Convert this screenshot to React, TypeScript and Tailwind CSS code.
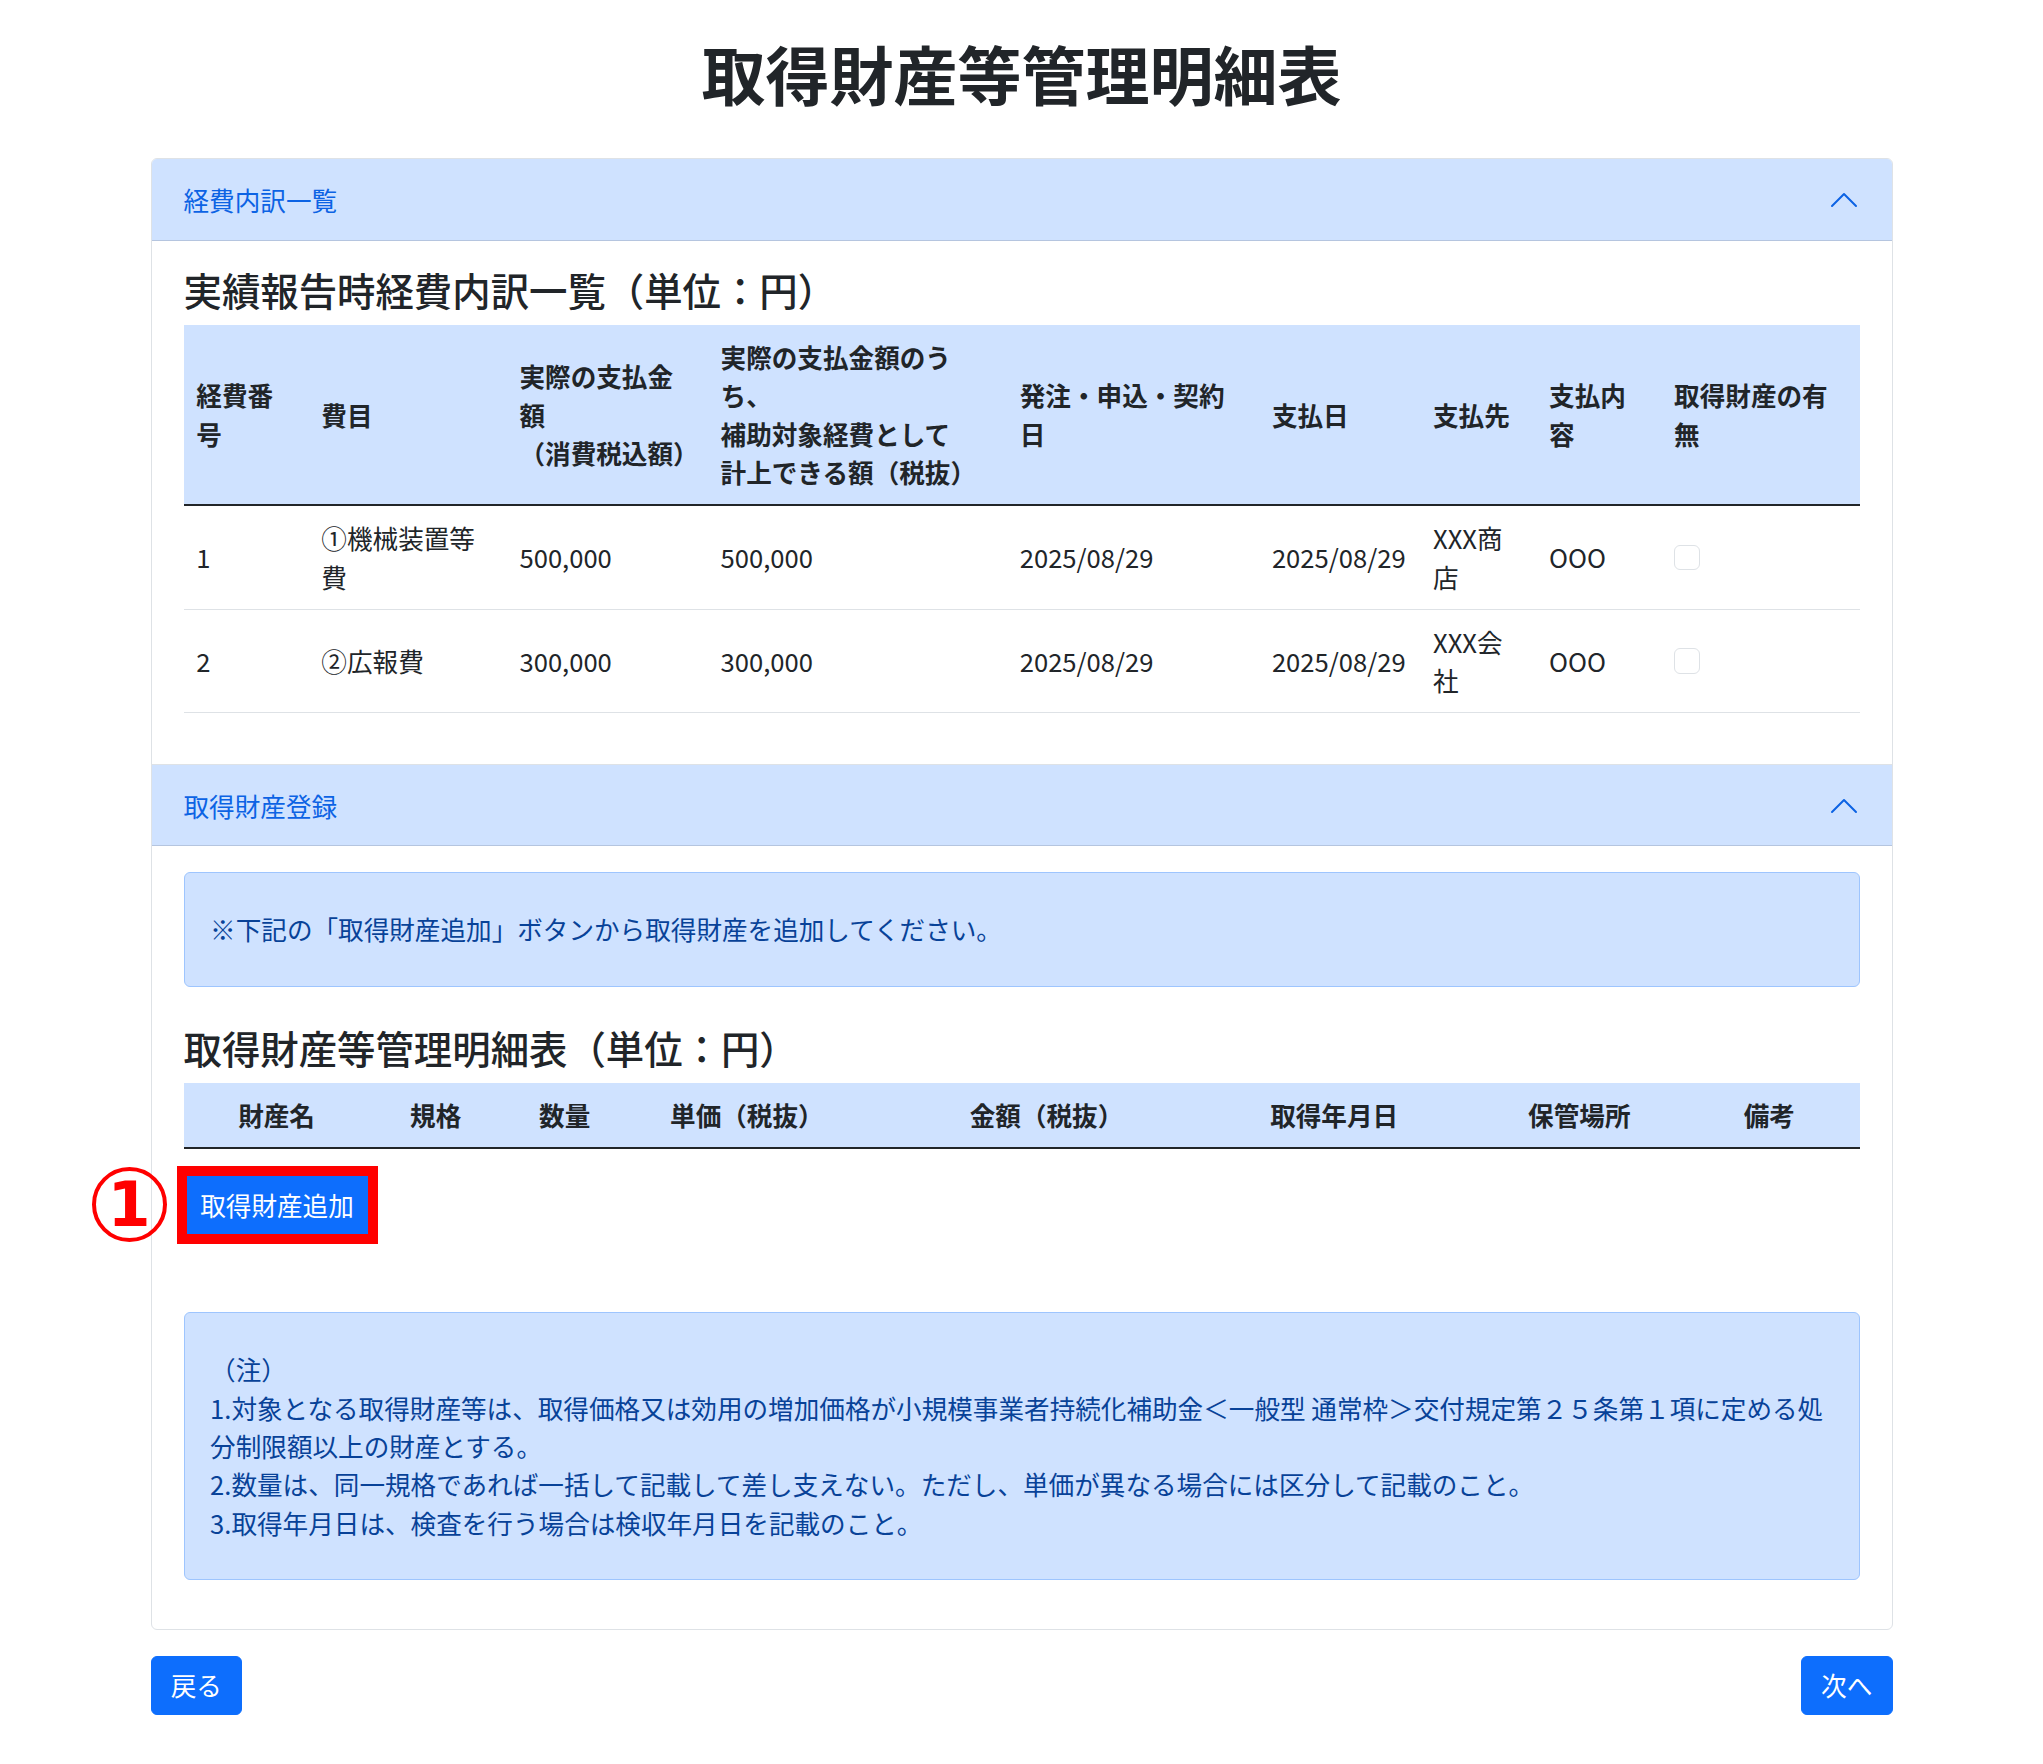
const expenseRows = [
  {
    no: "1",
    item: "①機械装置等費",
    paid: "500,000",
    eligible: "500,000",
    orderDate: "2025/08/29",
    payDate: "2025/08/29",
    payee: "XXX商店",
    content: "OOO",
  },
  {
    no: "2",
    item: "②広報費",
    paid: "300,000",
    eligible: "300,000",
    orderDate: "2025/08/29",
    payDate: "2025/08/29",
    payee: "XXX会社",
    content: "OOO",
  },
];

const assetCols = [
  { label: "財産名", w: "w-[186px]" },
  { label: "規格", w: "w-[132px]" },
  { label: "数量", w: "w-[126px]" },
  { label: "単価（税抜）", w: "w-[238px]" },
  { label: "金額（税抜）", w: "w-[361px]" },
  { label: "取得年月日", w: "w-[214px]" },
  { label: "保管場所", w: "w-[276px]" },
  { label: "備考", w: "w-[142px] pr-[51px]" },
];

function Chevron() {
  return (
    <svg width="32" height="32" viewBox="0 0 16 16" fill="none">
      <path d="M2 11L8 5L14 11" stroke="#0c63e4" strokeWidth="1" strokeLinecap="round" strokeLinejoin="round" />
    </svg>
  );
}

function SectionHeader({ title, first }: { title: string; first?: boolean }) {
  return (
    <div
      className={`flex h-[82px] items-center justify-between bg-[#cfe2ff] px-[32px] text-[25.6px] text-[#0c63e4] shadow-[inset_0_-1px_0_rgba(0,0,0,0.125)] ${
        first ? "rounded-t-[5px]" : "border-t border-[#dee2e6]"
      }`}
    >
      <span>{title}</span>
      <Chevron />
    </div>
  );
}

const th = "px-[12.8px] py-[12.8px] align-middle font-bold";
const td = "px-[12.8px] py-[12.8px] align-middle border-b border-[#dee2e6]";

export default function App() {
  return (
    <div className="min-h-screen bg-white font-['Noto_Sans_CJK_JP',sans-serif] text-[25.6px] leading-[1.5] text-[#212529]">
      <div className="relative mx-auto w-[1742px] pb-[48px]">
        <h1 className="pt-[34px] mb-[47px] text-center text-[64px] leading-[1.2] font-bold">取得財産等管理明細表</h1>

        <div className="rounded-[6px] border border-[#dee2e6]">
          <SectionHeader title="経費内訳一覧" first />
          <div className="px-[32px] py-[25.6px]">
            <h4 className="mb-[12.8px] text-[38.4px] leading-[1.2] font-medium">実績報告時経費内訳一覧（単位：円）</h4>
            <table className="mb-[25.6px] w-full table-fixed border-collapse text-left">
              <thead>
                <tr className="bg-[#cfe2ff] border-b-2 border-[#212529]">
                  <th className={`${th} w-[125px]`}>経費番号</th>
                  <th className={`${th} w-[198px]`}>費目</th>
                  <th className={`${th} w-[201px]`}>
                    実際の支払金額
                    <br />
                    （消費税込額）
                  </th>
                  <th className={`${th} w-[299px]`}>
                    実際の支払金額のうち、
                    <br />
                    補助対象経費として
                    <br />
                    計上できる額（税抜）
                  </th>
                  <th className={`${th} w-[252px]`}>発注・申込・契約日</th>
                  <th className={`${th} w-[161px]`}>支払日</th>
                  <th className={`${th} w-[116px]`}>支払先</th>
                  <th className={`${th} w-[125px]`}>支払内容</th>
                  <th className={`${th} w-[198px]`}>取得財産の有無</th>
                </tr>
              </thead>
              <tbody>
                {expenseRows.map((r) => (
                  <tr key={r.no}>
                    <td className={td}>{r.no}</td>
                    <td className={td}>{r.item}</td>
                    <td className={td}>{r.paid}</td>
                    <td className={td}>{r.eligible}</td>
                    <td className={td}>{r.orderDate}</td>
                    <td className={td}>{r.payDate}</td>
                    <td className={td}>{r.payee}</td>
                    <td className={td}>{r.content}</td>
                    <td className={td}>
                      <span className="block h-[25.6px] w-[25.6px] rounded-[6px] border border-[#dee2e6] bg-white" />
                    </td>
                  </tr>
                ))}
              </tbody>
            </table>
          </div>

          <SectionHeader title="取得財産登録" />
          <div className="px-[32px] py-[25.6px]">
            <div className="mb-[37px] rounded-[6px] border border-[#9ec5fe] bg-[#cfe2ff] px-[25.6px] py-[37.5px] text-[#084298]">
              ※下記の「取得財産追加」ボタンから取得財産を追加してください。
            </div>

            <h4 className="mb-[12.8px] text-[38.4px] leading-[1.2] font-medium">取得財産等管理明細表（単位：円）</h4>
            <table className="w-full table-fixed border-collapse text-center">
              <thead>
                <tr className="bg-[#cfe2ff] border-b-2 border-[#212529]">
                  {assetCols.map((c) => (
                    <th key={c.label} className={`${th} ${c.w}`}>
                      {c.label}
                    </th>
                  ))}
                </tr>
              </thead>
            </table>

            <div className="relative mt-[17px] -ml-[7px] inline-block border-[10px] border-[#ff0000]">
              <span className="absolute -left-[95px] -top-[9px] flex h-[75px] w-[75px] items-center justify-center rounded-full border-[4px] border-[#ff0000] font-['DejaVu_Sans',sans-serif] text-[62px] font-bold leading-none text-[#ff0000]">
                1
              </span>
              <button className="flex h-[58px] w-[181px] items-center justify-center bg-[#0d6efd] text-white">
                取得財産追加
              </button>
            </div>

            <div className="mt-[68px] mb-[23px] rounded-[6px] border border-[#9ec5fe] bg-[#cfe2ff] px-[25.6px] py-[37px] text-[#084298]">
              （注）
              <br />
              1.対象となる取得財産等は、取得価格又は効用の増加価格が小規模事業者持続化補助金＜一般型 通常枠＞交付規定第２５条第１項に定める処分制限額以上の財産とする。
              <br />
              2.数量は、同一規格であれば一括して記載して差し支えない。ただし、単価が異なる場合には区分して記載のこと。
              <br />
              3.取得年月日は、検査を行う場合は検収年月日を記載のこと。
            </div>
          </div>
        </div>

        <div className="mt-[26px] flex justify-between">
          <button className="rounded-[6px] border border-[#0d6efd] bg-[#0d6efd] px-[19.2px] py-[9.6px] leading-[1.5] text-white">戻る</button>
          <button className="rounded-[6px] border border-[#0d6efd] bg-[#0d6efd] px-[19.2px] py-[9.6px] leading-[1.5] text-white">次へ</button>
        </div>
      </div>
    </div>
  );
}
